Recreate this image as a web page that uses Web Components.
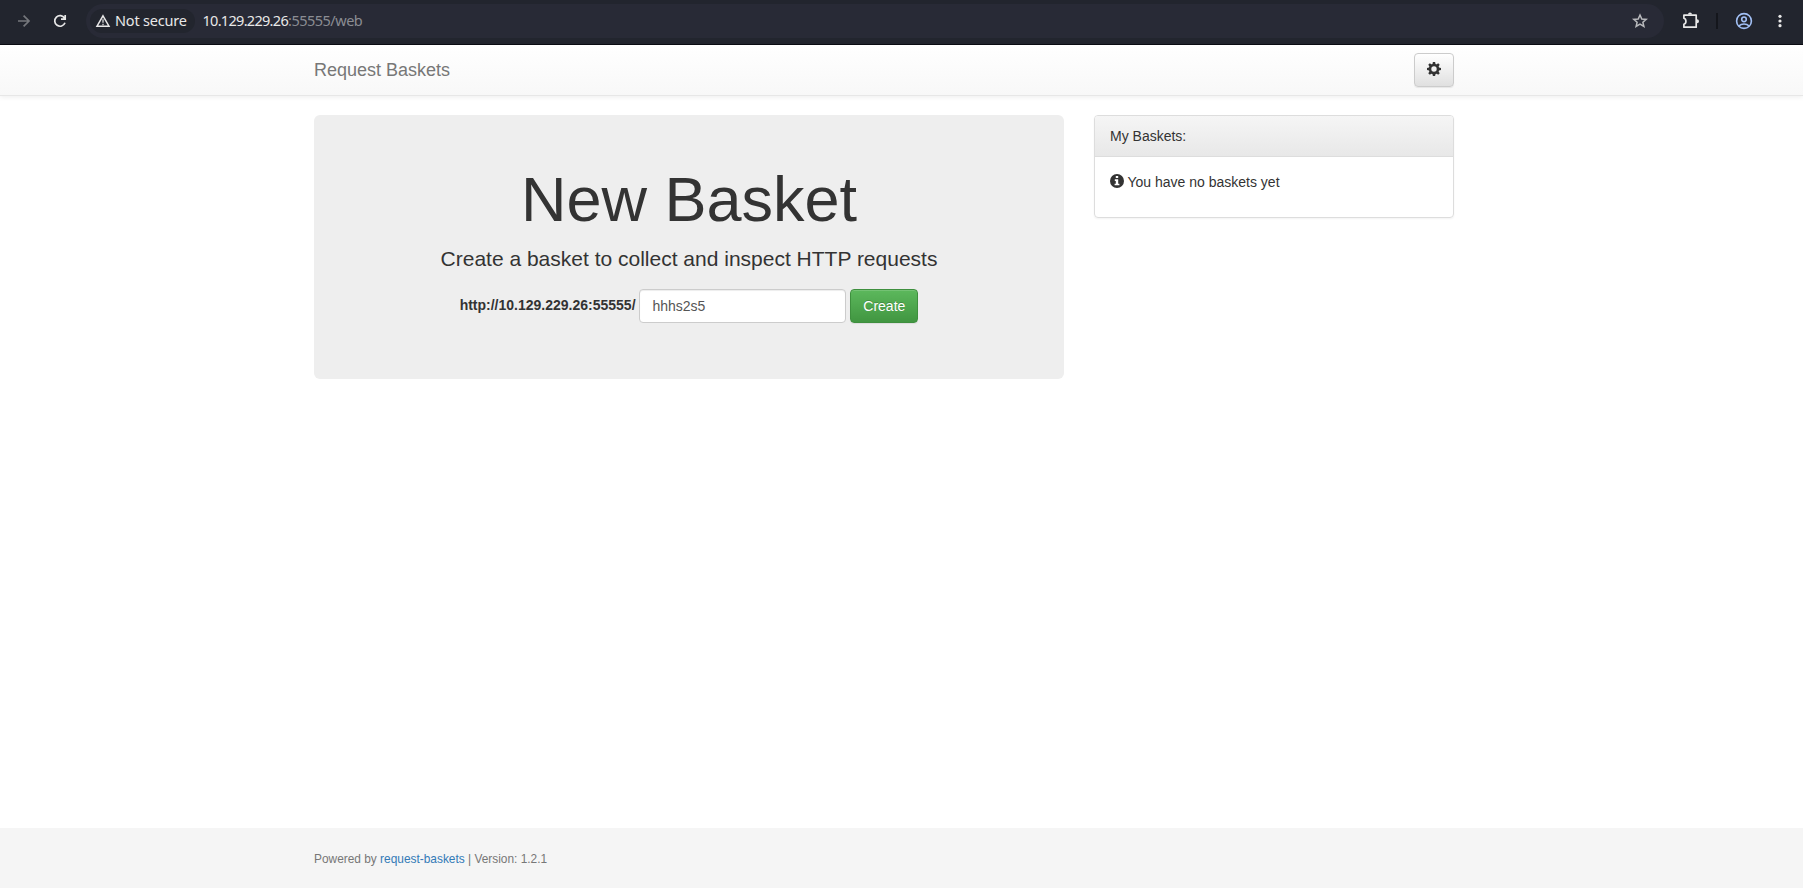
<!DOCTYPE html>
<html lang="en">
<head>
<meta charset="utf-8">
<title>Request Baskets</title>
<style>
  body {
    margin: 0;
    height: 888px;
    display: flex;
    flex-direction: column;
    overflow: hidden;
    background: #fff;
    color: #333;
    font: 14px/20px "Liberation Sans", Arial, sans-serif;
    --gutter: 314px;
    --content: 1140px;
  }

  main {
    flex: 1;
    display: grid;
    grid-template-columns: 750px 360px;
    align-items: start;
    gap: 30px;
    padding: 19px 0 0 var(--gutter);
  }
</style>
</head>
<body>
<browser-bar></browser-bar>
<basket-navbar>Request Baskets</basket-navbar>
<main>
  <basket-form host="http://10.129.229.26:55555/" name="hhhs2s5">
    <span slot="title">New Basket</span>
    Create a basket to collect and inspect HTTP requests
  </basket-form>
  <basket-panel>
    <span slot="heading">My Baskets:</span>
    You have no baskets yet
  </basket-panel>
</main>
<basket-footer version="1.2.1"></basket-footer>

<script>
class BrowserBar extends HTMLElement {
  constructor() {
    super();
    this.attachShadow({ mode: "open" });
  }

  static get styles() {
    return /* css */`
      :host {
        display: flex;
        align-items: center;
        box-sizing: border-box;
        height: 45px;
        padding: 0 14px 2px;
        background: #22252e;
        border-bottom: 1px solid #0b0d13;
        color: #e8e8e8;
        font: 14.5px/20px "Noto Sans", sans-serif;
      }

      svg {
        display: block;
        flex: none;
        fill: none;
        stroke: currentColor;
        stroke-width: 1.7;
      }

      .forward {
        color: #75777c;
        margin-right: 16px;
      }

      .address {
        flex: none;
        display: flex;
        align-items: center;
        box-sizing: border-box;
        width: 1578px;
        height: 34px;
        margin-left: 16px;
        padding: 0 14px 0 4px;
        border-radius: 17px;
        background: #282a36;
      }

      .chip {
        display: flex;
        align-items: center;
        box-sizing: border-box;
        width: 105px;
        height: 24px;
        padding-left: 5px;
        gap: 4px;
        border-radius: 12px;
        background: #22252e;
        letter-spacing: -.2px;
        white-space: nowrap;
      }

      .chip span, .url {
        margin-bottom: 3px;
      }

      .url {
        flex: 1;
        margin-left: 7.5px;
        color: #8b8d93;
        letter-spacing: -.5px;

        & b {
          font-weight: normal;
          color: #e8e8e8;
          letter-spacing: -.7px;
        }
      }

      .star { color: #b9babd; }
      .puzzle { margin-left: 17px; }

      .divider {
        width: 2px;
        height: 16px;
        margin: 0 17px 0 15px;
        background: #14161c;
      }

      .profile { color: #a2c0f5; }
      .menu { margin-left: 25px; }
    `;
  }

  connectedCallback() {
    this.render();
  }

  render() {
    this.shadowRoot.innerHTML = /* html */`
    <style>${BrowserBar.styles}</style>
    <svg class="forward" width="20" height="20" viewBox="0 0 20 20"><path d="M4 10h11M9.6 4.6L15 10l-5.4 5.4"/></svg>
    <svg width="20" height="20" viewBox="0 0 20 20"><path d="M14.6 7.2A5.3 5.3 0 1 0 15 11.8M15.2 4v4.2H11"/></svg>
    <div class="address">
      <div class="chip">
        <svg width="16" height="16" viewBox="0 0 16 16"><path stroke-width="1.5" d="M8 2.8L14 13.2H2Z"/><path stroke-width="1.2" d="M8 6.3v3.5M8 10.8v1.4"/></svg>
        <span>Not secure</span>
      </div>
      <div class="url"><b>10.129.229.26</b>:55555/web</div>
      <svg class="star" width="20" height="20" viewBox="0 0 20 20"><path stroke-width="1.5" d="M10 4l1.8 4 4.4.4-3.3 2.9 1 4.2L10 13.2l-3.9 2.3 1-4.2-3.3-2.9 4.4-.4z"/></svg>
    </div>
    <svg class="puzzle" width="20" height="20" viewBox="0 0 20 20"><path stroke-width="1.7" stroke-linejoin="round" d="M2.9 4.2H15.2V16.2H2.9V13.2C5.6 12.4 5.6 8 2.9 7.2Z"/><path stroke="none" fill="currentColor" d="M7 3.5a2 2 0 0 1 4 0zM16 8.2a2 2 0 0 1 0 4z"/></svg>
    <div class="divider"></div>
    <svg class="profile" width="18" height="18" viewBox="0 0 18 18"><g stroke-width="1.6"><circle cx="9" cy="9" r="7.4"/><circle cx="9" cy="7.3" r="2.3"/><path d="M3.8 14c2.8-2.6 7.6-2.6 10.4 0"/></g></svg>
    <svg class="menu" width="4" height="16" viewBox="0 0 4 16"><g fill="currentColor" stroke="none"><circle cx="2" cy="3.3" r="1.6"/><circle cx="2" cy="8" r="1.6"/><circle cx="2" cy="12.7" r="1.6"/></g></svg>
    `;
  }
}

class BasketNavbar extends HTMLElement {
  constructor() {
    super();
    this.attachShadow({ mode: "open" });
  }

  static get styles() {
    return /* css */`
      :host {
        display: flex;
        align-items: center;
        justify-content: space-between;
        box-sizing: border-box;
        height: 51px;
        padding: 0 calc(100% - var(--gutter) - var(--content)) 0 var(--gutter);
        border-bottom: 1px solid #e7e7e7;
        background: linear-gradient(#fff, #f8f8f8);
        box-shadow: 0 1px 5px rgba(0, 0, 0, .075);
        color: #777;
        font-size: 18px;
      }

      button {
        display: grid;
        place-items: center;
        box-sizing: border-box;
        width: 40px;
        height: 34px;
        padding: 0 0 2px;
        border: 1px solid #ccc;
        border-radius: 4px;
        background: linear-gradient(#fff, #e0e0e0);
        box-shadow: inset 0 1px 0 rgba(255, 255, 255, .15), 0 1px 1px rgba(0, 0, 0, .075);
        color: #333;
      }
    `;
  }

  connectedCallback() {
    this.render();
  }

  render() {
    // the teeth are eight short strokes around the ring
    const teeth = [0, 45, 90, 135, 180, 225, 270, 315]
      .map((a) => `<path d="M5.3 3L5.9 0h2.2l.6 3z" transform="rotate(${a} 7 7)"/>`)
      .join("");
    this.shadowRoot.innerHTML = /* html */`
    <style>${BasketNavbar.styles}</style>
    <span><slot></slot></span>
    <button aria-label="Settings">
      <svg width="14" height="14" viewBox="0 0 14 14" fill="currentColor">
        <circle cx="7" cy="7" r="3.95" fill="none" stroke="currentColor" stroke-width="2.5"/>${teeth}
      </svg>
    </button>`;
  }
}

class BasketForm extends HTMLElement {
  constructor() {
    super();
    this.attachShadow({ mode: "open" });
  }

  static get styles() {
    return /* css */`
      :host {
        display: block;
        box-sizing: border-box;
        height: 264px;
        padding: 50px 60px 46px;
        border-radius: 6px;
        background: #eee;
        text-align: center;
      }

      h1 {
        margin: 0 0 10px;
        font-size: 63px;
        font-weight: 500;
        line-height: 1.1;
      }

      p {
        margin: 0 0 15px;
        font-size: 21px;
        line-height: 30px;
      }

      form {
        display: flex;
        align-items: center;
        justify-content: center;
        gap: 3.9px;
      }

      label {
        font-weight: bold;
        margin-bottom: 2px;
      }

      input, button {
        box-sizing: border-box;
        height: 34px;
        padding: 6px 12px;
        border: 1px solid #ccc;
        border-radius: 4px;
        font: inherit;
      }

      input {
        width: 207px;
        color: #555;
        background: #fff;
        box-shadow: inset 0 1px 1px rgba(0, 0, 0, .075);
      }

      button {
        border-color: #3e8f3e;
        background: linear-gradient(#5cb85c, #419641);
        box-shadow: inset 0 1px 0 rgba(255, 255, 255, .15), 0 1px 1px rgba(0, 0, 0, .075);
        color: #fff;
        text-shadow: 0 -1px 0 rgba(0, 0, 0, .2);
      }
    `;
  }

  connectedCallback() {
    this.render();
  }

  render() {
    this.shadowRoot.innerHTML = /* html */`
    <style>${BasketForm.styles}</style>
    <h1><slot name="title"></slot></h1>
    <p><slot></slot></p>
    <form>
      <label for="name">${this.getAttribute("host")}</label>
      <input id="name" type="text" value="${this.getAttribute("name")}">
      <button type="button">Create</button>
    </form>`;
  }
}

class BasketPanel extends HTMLElement {
  constructor() {
    super();
    this.attachShadow({ mode: "open" });
  }

  static get styles() {
    return /* css */`
      :host {
        display: block;
        border: 1px solid #ddd;
        border-radius: 4px;
        box-sizing: border-box;
        box-shadow: 0 1px 2px rgba(0, 0, 0, .05);
      }

      .heading {
        padding: 10px 15px;
        border-bottom: 1px solid #ddd;
        border-radius: 3px 3px 0 0;
        background: linear-gradient(#f5f5f5, #e8e8e8);
      }

      .body {
        display: flex;
        gap: 3.5px;
        padding: 15px 15px 25px;
      }

      svg {
        margin-top: 2px;
      }
    `;
  }

  connectedCallback() {
    this.render();
  }

  render() {
    this.shadowRoot.innerHTML = /* html */`
    <style>${BasketPanel.styles}</style>
    <div class="heading"><slot name="heading"></slot></div>
    <div class="body">
      <svg width="14" height="14" viewBox="0 0 14 14">
        <circle cx="7" cy="7" r="7" fill="#333"/>
        <path fill="#fff" d="M5.8 2h2.4v2H5.8zM4.8 5.3h3.4v4.4h1.2v1.6H4.6V9.7h1.2V6.9h-1z"/>
      </svg>
      <span><slot></slot></span>
    </div>`;
  }
}

class BasketFooter extends HTMLElement {
  constructor() {
    super();
    this.attachShadow({ mode: "open" });
  }

  static get styles() {
    return /* css */`
      :host {
        display: block;
        box-sizing: border-box;
        height: 60px;
        padding: 21px 0 0 var(--gutter);
        background: #f5f5f5;
        color: #777;
        font-size: 11.9px;
      }

      a {
        color: #337ab7;
        text-decoration: none;
      }
    `;
  }

  connectedCallback() {
    this.render();
  }

  render() {
    this.shadowRoot.innerHTML = /* html */`
    <style>${BasketFooter.styles}</style>
    Powered by <a href="#">request-baskets</a> | Version: ${this.getAttribute("version")}`;
  }
}

customElements.define("browser-bar", BrowserBar);
customElements.define("basket-navbar", BasketNavbar);
customElements.define("basket-form", BasketForm);
customElements.define("basket-panel", BasketPanel);
customElements.define("basket-footer", BasketFooter);
</script>
</body>
</html>
